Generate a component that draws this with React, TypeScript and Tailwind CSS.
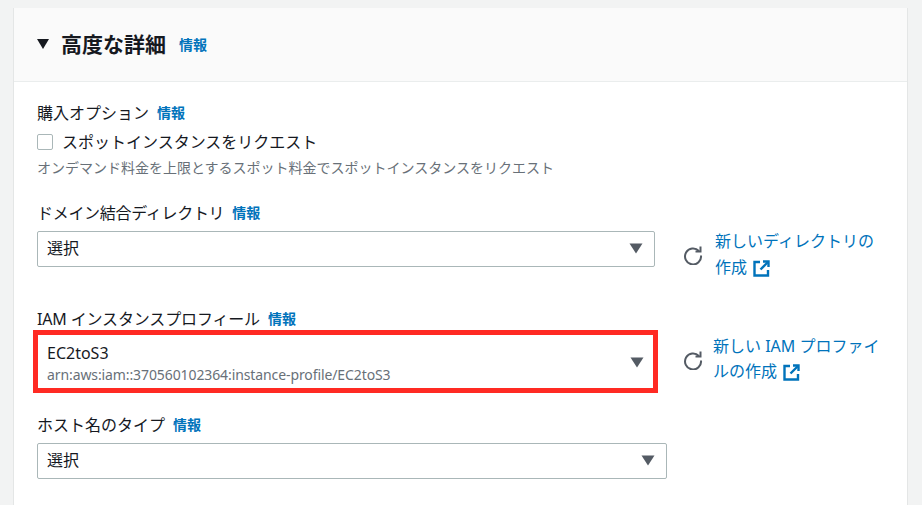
const font = "font-['Noto_Sans','Noto_Sans_CJK_JP',sans-serif]";

function Info() {
  return <a className="ml-2 text-[14px] leading-[20px] font-bold text-[#0073bb] tracking-normal">情報</a>;
}

function Label({ text, cls }: { text: string; cls?: string }) {
  return (
    <div className={`flex items-center h-[22px] text-[16px] leading-[22px] text-[#16191f] whitespace-nowrap ${cls ?? ""}`}>
      {text}
      <Info />
    </div>
  );
}

function Caret() {
  return (
    <svg width="14" height="11" viewBox="0 0 14 11" className="shrink-0">
      <path d="M0.5 0.5H13.5L7 10.5Z" fill="#545b64" />
    </svg>
  );
}

function External() {
  return (
    <svg width="17" height="17" viewBox="0 0 17 17" fill="none" stroke="#0073bb" strokeWidth="2.4" className="inline-block align-[-4px] ml-[6px]">
      <path d="M7 2H1.5V15.5H15V10" />
      <path d="M10 1.5H15.5V7" />
      <path d="M15 2L7.5 9.5" />
    </svg>
  );
}

function Refresh() {
  return (
    <svg width="20" height="20" viewBox="0 0 20 20" fill="none" stroke="#545b64" strokeWidth="2" className="shrink-0">
      <path d="M15.9 6A8 8 0 1 0 18 10.5" />
      <path d="M17.5 1.5V6.5H12.5" />
    </svg>
  );
}

export default function App() {
  return (
    <div className={`${font} w-[922px] h-[505px] overflow-hidden bg-[#f2f3f3] pt-[8px] pl-[13px]`}>
      <div className="w-[895px] h-[497px] bg-white border-x border-[#e4e6e6]">
        <div className="flex items-center h-[74px] pl-[23px] pb-[1px] bg-[#fafafa] border-b border-[#eaeded]">
          <svg width="12" height="10" viewBox="0 0 12 10" className="shrink-0">
            <path d="M0 0H12L6 10Z" fill="#16191f" />
          </svg>
          <h2 className="ml-[12px] text-[21px] leading-[28px] font-bold text-[#16191f]">高度な詳細</h2>
          <a className="ml-[13px] mt-[2px] text-[14px] leading-[20px] font-bold text-[#0073bb]">情報</a>
        </div>
        <div className="pl-[23px] pt-[20px]">
          <Label text="購入オプション" />
          <div className="flex items-center mt-[6px] h-[24px]">
            <span className="w-[16px] h-[16px] bg-white border border-[#aab7b8] rounded-[2px]" />
            <span className="ml-[9px] text-[16px] text-[#16191f]">スポットインスタンスをリクエスト</span>
          </div>
          <div className="mt-[4px] h-[20px] text-[14px] leading-[20px] text-[#687078]">
            オンデマンド料金を上限とするスポット料金でスポットインスタンスをリクエスト
          </div>

          <div className="mt-[24px]">
            <Label text="ドメイン結合ディレクトリ" cls="tracking-[-0.3px]" />
          </div>
          <div className="flex items-start h-[36px] mt-[7px]">
            <div className="flex items-center justify-between w-[618px] h-[36px] pl-[9px] pr-[11px] pb-[2px] bg-white border border-[#aab7b8] rounded-[2px] text-[16px] text-[#16191f]">
              <span>選択</span>
              <Caret />
            </div>
            <div className="ml-[28px] mt-[14px]"><Refresh /></div>
            <a className="ml-[12px] mt-[-3px] w-[170px] text-[16px] leading-[26px] text-[#0073bb]">
              新しいディレクトリの作成<External />
            </a>
          </div>

          <div className="mt-[41px]">
            <Label text="IAM インスタンスプロフィール" cls="tracking-[-0.15px]" />
          </div>
          <div className="relative flex items-start h-[54px] mt-[5px]">
            <div className="flex items-center justify-between w-[618px] h-[54px] pl-[10px] pr-[11px] bg-white">
              <div>
                <div className="text-[16px] leading-[24px] text-[#16191f]">EC2toS3</div>
                <div className="text-[14px] leading-[19px] tracking-[-0.1px] text-[#687078]">arn:aws:iam::370560102364:instance-profile/EC2toS3</div>
              </div>
              <Caret />
            </div>
            <div className="absolute left-[-4px] top-[-5px] w-[625px] h-[63px] border-[5px] border-[#ff2a23] pointer-events-none" />
            <div className="ml-[28px] mt-[15px]"><Refresh /></div>
            <a className="ml-[10px] mt-[-1px] w-[170px] text-[16px] leading-[25px] text-[#0073bb]">
              新しい IAM プロファイルの作成<External />
            </a>
          </div>

          <div className="mt-[25px]">
            <Label text="ホスト名のタイプ" />
          </div>
          <div className="mt-[7px] w-[630px]">
            <div className="flex items-center justify-between w-[630px] h-[36px] pl-[9px] pr-[11px] pb-[2px] bg-white border border-[#aab7b8] rounded-[2px] text-[16px] text-[#16191f]">
              <span>選択</span>
              <Caret />
            </div>
          </div>
        </div>
      </div>
    </div>
  );
}
